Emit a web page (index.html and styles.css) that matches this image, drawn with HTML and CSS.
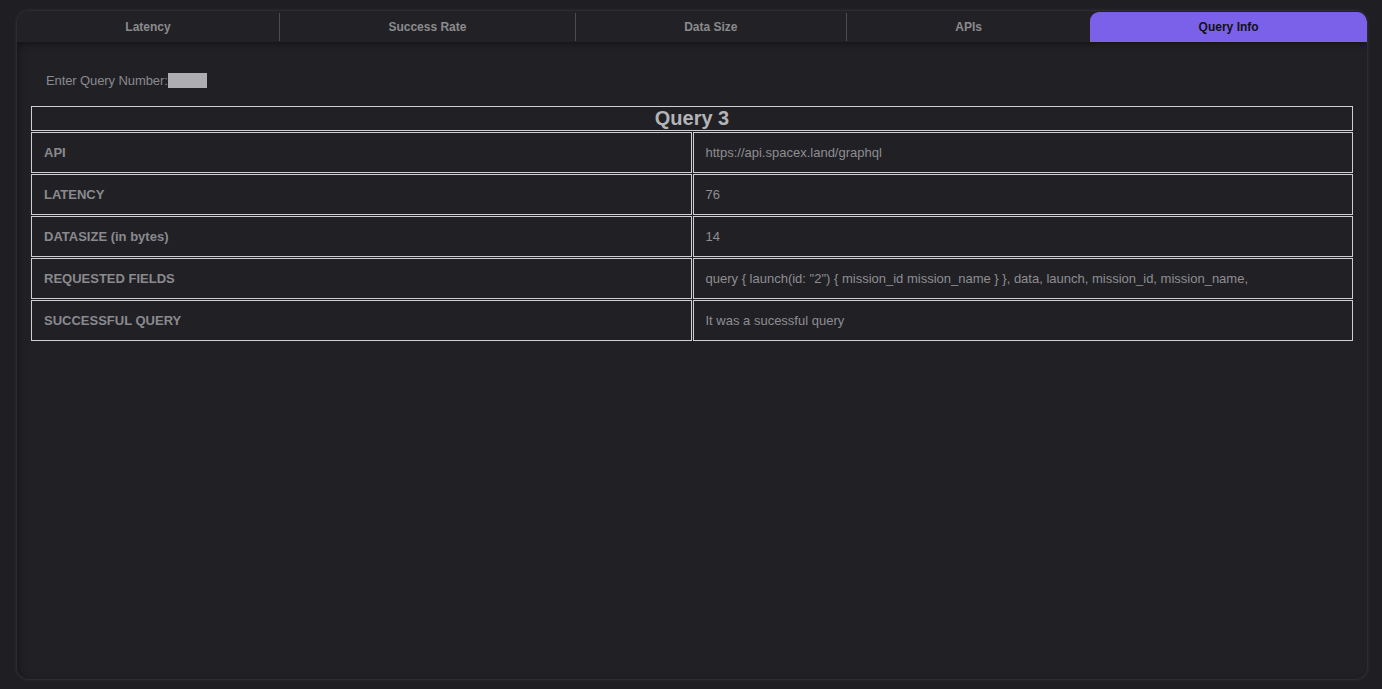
FILE: index.html
```html
<!DOCTYPE html>
<html lang="en">
<head>
<meta charset="utf-8">
<title>Query Info</title>
<link rel="stylesheet" href="styles.css">
</head>
<body>
<div class="card">
  <nav class="tabs">
    <div class="tab">Latency</div>
    <div class="tab sep">Success Rate</div>
    <div class="tab sep">Data Size</div>
    <div class="tab sep">APIs</div>
    <div class="tab active">Query Info</div>
  </nav>
  <section class="panel">
    <div class="query-form">
      <label class="query-label" for="q">Enter Query Number:</label>
      <input class="query-input" id="q" type="text">
    </div>
    <table class="info">
      <thead>
        <tr><th class="title" colspan="2">Query 3</th></tr>
      </thead>
      <tbody>
        <tr><td class="key">API</td><td class="val">https://api.spacex.land/graphql</td></tr>
        <tr><td class="key">LATENCY</td><td class="val">76</td></tr>
        <tr><td class="key">DATASIZE (in bytes)</td><td class="val">14</td></tr>
        <tr><td class="key">REQUESTED FIELDS</td><td class="val">query { launch(id: "2") { mission_id mission_name } }, data, launch, mission_id, mission_name,</td></tr>
        <tr><td class="key">SUCCESSFUL QUERY</td><td class="val">It was a sucessful query</td></tr>
      </tbody>
    </table>
  </section>
</div>
</body>
</html>
```

FILE: styles.css
```css
html, body {
  margin: 0;
  padding: 0;
  background: #1f1f23;
  font-family: "Liberation Sans", Arial, Helvetica, sans-serif;
}
body {
  padding: 11px 15px 10px 17px;
  height: 689px;
  box-sizing: border-box;
}
.card {
  width: 1350px;
  height: 668px;
  box-sizing: border-box;
  border-radius: 12px;
  background: #212125;
  box-shadow: 0 0 0 1px #2c2c31, 0 0 4px 1px rgba(255,255,255,0.06), inset 5px 0 8px -4px rgba(0,0,0,0.35);
  display: flex;
  flex-direction: column;
  overflow: hidden;
}
.tabs {
  display: flex;
  height: 31px;
  background: #222226;
  box-shadow: 0 3px 5px rgba(0,0,0,0.3);
  position: relative;
  z-index: 1;
}
.tab {
  flex: 1 1 auto;
  display: flex;
  align-items: center;
  justify-content: center;
  font-size: 12px;
  font-weight: bold;
  color: #8b8b8e;
  box-sizing: border-box;
}
.tab.sep {
  border-left: 1px solid #4c4c50;
  margin-top: 2px;
  margin-bottom: 1px;
  padding-bottom: 1px;
}
.tab.active {
  background: #7b61ea;
  color: #111114;
  border-radius: 9px 9px 0 0;
  margin-top: 1px;
}
.panel {
  flex: 1;
  padding: 0 13px 0 13px;
}
.query-form {
  display: flex;
  align-items: center;
  height: 15px;
  margin-top: 31px;
  padding-left: 16px;
}
.query-label {
  font-size: 13px;
  color: #8a8a8e;
  letter-spacing: -0.1px;
}
.query-input {
  width: 39px;
  height: 15px;
  box-sizing: border-box;
  border: none;
  padding: 0;
  margin: 0;
  background: #adadb2;
}
.info {
  margin-top: 17px;
  width: 100%;
  table-layout: fixed;
  border-collapse: separate;
  border-spacing: 1px;
}
.info th, .info td {
  border: 1px solid #cfcfd2;
}
.title {
  height: 23px;
  padding: 0;
  font-size: 20px;
  font-weight: bold;
  color: #b4b4b8;
  text-align: center;
  line-height: 23px;
}
.info td {
  height: 41px;
  padding: 0 12px;
  font-size: 13px;
  line-height: 15px;
  color: #8e8e92;
  box-sizing: border-box;
  vertical-align: middle;
}
.info td.key {
  font-weight: bold;
  color: #8a8a8e;
}
```
